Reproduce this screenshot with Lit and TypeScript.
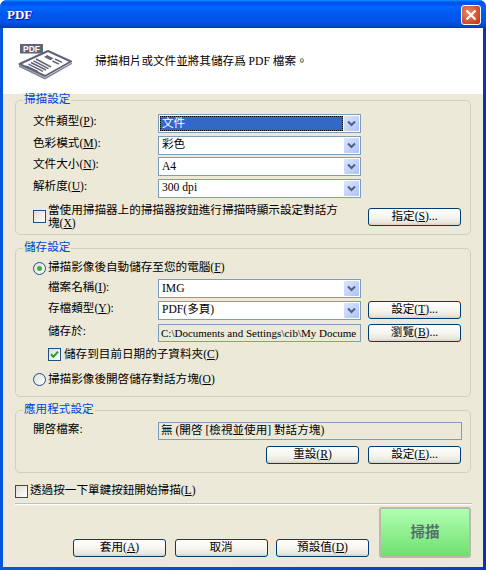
import { LitElement, html, css, svg } from "lit";
import { customElement } from "lit/decorators.js";

const chevron = html`<svg class="chev" viewBox="0 0 9 7" width="9" height="7"><path d="M1 1.5 L4.5 5 L8 1.5" fill="none" stroke="#4d6185" stroke-width="2"/></svg>`;

function mn(before: string, key: string, after = "") {
  return html`${before}(<u>${key}</u>)${after}`;
}

function combo(text: unknown, selected = false) {
  return html`<div class="combo">
    <div class="combo-text ${selected ? "sel" : ""}"><span>${text}</span></div>
    <div class="combo-btn">${chevron}</div>
  </div>`;
}

function btn(content: unknown) {
  return html`<button class="btn">${content}</button>`;
}

function check(on = false) {
  return html`<span class="check">${on
    ? html`<svg viewBox="0 0 11 11" width="11" height="11"><path d="M2 5.2 L4.4 7.8 L9 2.6" fill="none" stroke="#21a121" stroke-width="2"/></svg>`
    : ""}</span>`;
}

function radio(on = false) {
  return html`<span class="radio">${on ? html`<i></i>` : ""}</span>`;
}

const pdfIcon = svg`<svg class="logo" width="55" height="36" viewBox="0 0 55 36">
  <rect x="2" y="0" width="23" height="9.5" fill="#5f6577"/>
  <text x="13.5" y="8" text-anchor="middle" font-family="Liberation Sans, sans-serif" font-weight="700" font-size="8.5" fill="#fff">PDF</text>
  <path d="M30 7 L53 17.5 L27 32 L1.5 20 Z" fill="#fff" stroke="#5f6577" stroke-width="2" stroke-linejoin="round"/>
  <path d="M1 21 L27 33.5 L54 18.5 L54 20 L27 35.5 L1 23 Z" fill="#858997"/>
  <g stroke="#5f6577" stroke-width="1.5" fill="none">
    <path d="M18 15 L33 23"/><path d="M15.5 16.8 L30.5 24.6"/><path d="M13 18.5 L28 26"/><path d="M10.5 20.2 L25 27.4"/><path d="M8 22 L20 27.8"/>
  </g>
  <path d="M29 11 L35.5 14.2 L32.5 16.2 L26 13 Z" fill="#5f6577"/>
  <path d="M37 15 L44 18.4 M34.5 17 L41 20.2" stroke="#5f6577" stroke-width="1.5"/>
</svg>`;

@customElement("app-root")
export class AppRoot extends LitElement {
  static styles = css`
    :host {
      display: block;
      width: 486px;
      height: 570px;
      background: #fff;
      overflow: hidden;
      font-family: "Liberation Serif", "Noto Sans CJK TC", serif;
      font-size: 11.6px;
      color: #000;
    }
    * { box-sizing: border-box; }
    .window {
      width: 486px;
      height: 570px;
      border-radius: 7px 7px 0 0;
      overflow: hidden;
      display: flex;
      flex-direction: column;
      background: linear-gradient(90deg, #0855dd 0, #0855dd 3px, #0a3fc8 478px, #0a2fb4 486px);
    }
    .title {
      height: 28px;
      flex: none;
      display: flex;
      align-items: center;
      justify-content: space-between;
      padding: 2px 5px 0 7px;
      background: linear-gradient(180deg, #0997ff 0, #0053ee 2px, #0050ee 4px, #0066ff 7px, #0058f0 14px, #0055e5 22px, #0042c8 27px, #0037a8 28px);
      color: #fff;
      font-weight: 700;
      font-size: 13px;
      text-shadow: 1px 1px 0 #0f1089;
    }
    .close {
      width: 20px;
      height: 20px;
      border: 1px solid #fff;
      border-radius: 3px;
      background: radial-gradient(circle at 35% 35%, #e98a6d, #d6512c 60%, #b93411);
      display: flex;
      align-items: center;
      justify-content: center;
    }
    .client {
      flex: 1;
      margin: 0 3px 3px 3px;
      background: #ece9d8;
      display: flex;
      flex-direction: column;
      min-height: 0;
    }
    .header {
      height: 66px;
      flex: none;
      background: #fff;
      display: flex;
      align-items: center;
      padding: 0 0 2px 15px;
      gap: 22px;
    }
    .logo { display: block; margin-top: 3px; flex: none; }
    .body {
      flex: 1;
      padding: 6px 12px 0 12px;
      display: flex;
      flex-direction: column;
    }
    .group {
      position: relative;
      border: 1px solid #d0d0bf;
      border-radius: 5px;
      flex: none;
    }
    .group-label {
      position: absolute;
      left: 7px;
      top: -8px;
      padding: 0 1px;
      background: #ece9d8;
      color: #0046d5;
      line-height: 14px;
    }
    .g1 { height: 135px; padding: 13px 9px 0 17px; }
    .g2 { height: 149px; margin-top: 13px; padding: 12px 9px 0 17px; }
    .g3 { height: 63px; margin-top: 13px; padding: 11px 8px 0 17px; }
    .rows { display: flex; flex-direction: column; }
    .r {
      display: grid;
      grid-template-columns: 125px 203px 7px 93px;
      align-items: center;
      height: 19px;
    }
    .r > .b { grid-column: 4; }
    .pitch { margin-top: 2.67px; }
    .lab { white-space: nowrap; line-height: 14px; padding-bottom: 3px; }
    .lab.in { padding-left: 15px; padding-bottom: 2px; }
    .combo {
      height: 19px;
      border: 1px solid #7f9db9;
      background: #fff;
      display: flex;
      align-items: stretch;
      padding: 1px;
    }
    .combo-text {
      flex: 1;
      min-width: 0;
      display: flex;
      align-items: center;
      padding-left: 2px;
      line-height: 14px;
      white-space: nowrap;
    }
    .combo-text.sel {
      background: #316ac5;
      color: #fff;
      outline: 1px dotted #000;
      outline-offset: -1px;
    }
    .combo-btn {
      width: 15px;
      flex: none;
      margin-left: 1px;
      border-radius: 1px;
      background: linear-gradient(135deg, #dce6fb, #bccdf7 70%, #adc1f2);
      display: flex;
      align-items: center;
      justify-content: center;
    }
    .chev { display: block; }
    .btn {
      display: block;
      width: 93px;
      height: 18px;
      padding: 0;
      margin: 0;
      border: 1px solid #003c74;
      border-radius: 3px;
      background: linear-gradient(180deg, #fff 0, #f6f5ef 50%, #e9e7dd 85%, #d6d0c5 100%);
      font: inherit;
      color: #000;
      line-height: 14px;
      white-space: nowrap;
    }
    .check {
      width: 13px;
      height: 13px;
      flex: none;
      border: 1px solid #1c5180;
      background: linear-gradient(135deg, #dcdcd7, #fff);
      display: flex;
      align-items: center;
      justify-content: center;
    }
    .radio {
      display: flex;
      width: 13px;
      height: 13px;
      flex: none;
      border-radius: 50%;
      border: 1px solid #1c5180;
      background: linear-gradient(135deg, #dcdcd7, #fff);
      align-items: center;
      justify-content: center;
    }
    .radio i {
      display: block;
      width: 5px;
      height: 5px;
      border-radius: 50%;
      background: #3cb43c;
    }
    .opt {
      display: flex;
      align-items: center;
      gap: 2px;
      white-space: nowrap;
      line-height: 14px;
    }
    .scan-check-row {
      display: grid;
      grid-template-columns: 328px 7px 93px;
      align-items: center;
      margin-top: 6px;
    }
    .wrap-text { line-height: 13px; width: 296px; }
    .checkwrap { display: flex; align-items: center; gap: 2px; }
    .readonly {
      height: 18px;
      border: 1px solid #7f9db9;
      background: #ece9d8;
      padding: 0 0 0 2px;
      line-height: 16px;
      font-size: 11px;
      white-space: nowrap;
      overflow: hidden;
    }
    .field {
      height: 18px;
      width: 304px;
      border: 1px solid #7f9db9;
      background: #ece9d8;
      padding-left: 2px;
      line-height: 16px;
      white-space: nowrap;
    }
    .g3-top { display: flex; align-items: center; }
    .g3-top .lab { width: 125px; flex: none; }
    .g3-btns {
      display: flex;
      justify-content: flex-end;
      gap: 9px;
      margin-top: 6px;
      padding-right: 1px;
    }
    .rows-g2 { margin-top: 4px; }
    .pitch-ro { margin-top: 4px; }
    .sub { padding-left: 15px; margin-top: 5px; gap: 3px; }
    .second { margin-top: 11px; }
    .one { margin-top: 11px; }
    .sep {
      height: 2px;
      margin-top: 5px;
      margin-right: -1px;
      background: #c4c1b0;
      border-bottom: 1px solid #fff;
      flex: none;
    }
    .footer {
      display: flex;
      align-items: flex-end;
      margin-top: 2px;
      margin-right: -1px;
    }
    .footer-btns {
      display: flex;
      gap: 8.5px;
      padding: 0 0 1px 58px;
      width: 364px;
    }
    .footer-btns .btn { width: 93px; flex: none; }
    .scan {
      width: 92px;
      height: 51px;
      border: 2px solid #b9b9b0;
      border-radius: 3px;
      background: linear-gradient(180deg, #b1ffb0 0, #6fe070 100%);
      font: inherit;
      font-size: 14.5px;
      font-weight: 700;
      color: #55706b;
      padding: 0 0 5px;
    }
  `;

  render() {
    return html`<div class="window">
      <div class="title">
        <span>PDF</span>
        <div class="close">
          <svg width="12" height="12" viewBox="0 0 12 12"><path d="M1.5 1.5 L10.5 10.5 M10.5 1.5 L1.5 10.5" stroke="#fff" stroke-width="2.2"/></svg>
        </div>
      </div>
      <div class="client">
        <div class="header">${pdfIcon}<span>掃描相片或文件並將其儲存爲 PDF 檔案。</span></div>
        <div class="body">
          <section class="group g1">
            <div class="group-label">掃描設定</div>
            <div class="rows">
              <div class="r"><div class="lab">${mn("文件類型", "P", ":")}</div>${combo("文件", true)}</div>
              <div class="r pitch"><div class="lab">${mn("色彩模式", "M", ":")}</div>${combo("彩色")}</div>
              <div class="r pitch"><div class="lab">${mn("文件大小", "N", ":")}</div>${combo("A4")}</div>
              <div class="r pitch"><div class="lab">${mn("解析度", "U", ":")}</div>${combo("300 dpi")}</div>
            </div>
            <div class="scan-check-row">
              <div class="checkwrap">${check()}<div class="wrap-text">當使用掃描器上的掃描器按鈕進行掃描時顯示設定對話方塊(<u>X</u>)</div></div>
              <span></span>
              ${btn(mn("指定", "S", "..."))}
            </div>
          </section>

          <section class="group g2">
            <div class="group-label">儲存設定</div>
            <div class="opt">${radio(true)}<span>掃描影像後自動儲存至您的電腦(<u>F</u>)</span></div>
            <div class="rows rows-g2">
              <div class="r"><div class="lab in">${mn("檔案名稱", "I", ":")}</div>${combo("IMG")}</div>
              <div class="r pitch"><div class="lab in">${mn("存檔類型", "Y", ":")}</div>${combo("PDF(多頁)")}<span></span><div class="b">${btn(mn("設定", "T", "..."))}</div></div>
              <div class="r pitch-ro"><div class="lab in">儲存於:</div><div class="readonly">C:\\Documents and Settings\\cib\\My Docume</div><span></span><div class="b">${btn(mn("瀏覽", "B", "..."))}</div></div>
            </div>
            <div class="opt sub">${check(true)}<span>儲存到目前日期的子資料夾(<u>C</u>)</span></div>
            <div class="opt second">${radio()}<span>掃描影像後開啓儲存對話方塊(<u>O</u>)</span></div>
          </section>

          <section class="group g3">
            <div class="group-label">應用程式設定</div>
            <div class="g3-top"><div class="lab">開啓檔案:</div><div class="field">無 (開啓 [檢視並使用] 對話方塊)</div></div>
            <div class="g3-btns">${btn(mn("重設", "R"))}${btn(mn("設定", "E", "..."))}</div>
          </section>

          <div class="opt one">${check()}<span>透過按一下單鍵按鈕開始掃描(<u>L</u>)</span></div>
          <div class="sep"></div>
          <div class="footer">
            <div class="footer-btns">
              ${btn(mn("套用", "A"))}
              ${btn("取消")}
              ${btn(mn("預設值", "D"))}
            </div>
            <button class="scan">掃描</button>
          </div>
        </div>
      </div>
    </div>`;
  }
}
